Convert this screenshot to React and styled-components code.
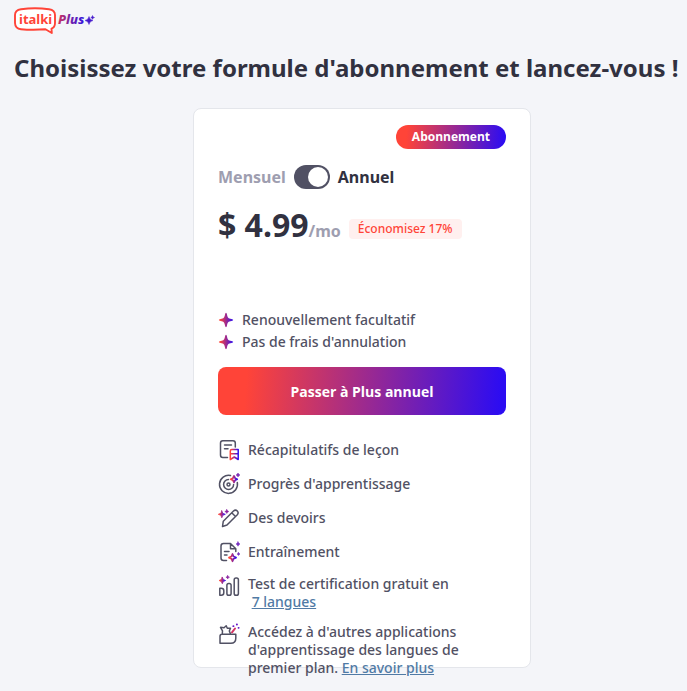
import { useState } from "react";
import styled, { createGlobalStyle } from "styled-components";

export default function App() {
  const [annual, setAnnual] = useState(true);

  return (
    <Page>
      <GlobalStyle />
      <Header>
        <Logo />
      </Header>
      <Title>Choisissez votre formule d'abonnement et lancez-vous !</Title>
      <Plans>
        <Card>
          <Badge>Abonnement</Badge>
          <PeriodSwitch>
            <Period $active={!annual}>Mensuel</Period>
            <Toggle
              type="checkbox"
              role="switch"
              aria-label="Annuel"
              checked={annual}
              onChange={(e) => setAnnual(e.target.checked)}
            />
            <Period $active={annual}>Annuel</Period>
          </PeriodSwitch>
          <PriceRow>
            <Price>
              $ 4.99<Unit>/mo</Unit>
            </Price>
            <Saving>Économisez 17%</Saving>
          </PriceRow>
          <Perks>
            <Perk>
              <StarIcon />
              Renouvellement facultatif
            </Perk>
            <Perk>
              <StarIcon />
              Pas de frais d'annulation
            </Perk>
          </Perks>
          <UpgradeButton type="button">Passer à Plus annuel</UpgradeButton>
          <Features>
            <Feature>
              <SummaryIcon />
              <FeatureText>Récapitulatifs de leçon</FeatureText>
            </Feature>
            <Feature>
              <TargetIcon />
              <FeatureText>Progrès d'apprentissage</FeatureText>
            </Feature>
            <Feature>
              <PencilIcon />
              <FeatureText>Des devoirs</FeatureText>
            </Feature>
            <Feature>
              <PracticeIcon />
              <FeatureText>Entraînement</FeatureText>
            </Feature>
            <Feature $multiline>
              <ChartIcon />
              <FeatureText>
                Test de certification gratuit en
                <br />
                &nbsp;<Link href="#langues">7 langues</Link>
              </FeatureText>
            </Feature>
            <Feature $multiline>
              <AppsIcon />
              <FeatureText>
                Accédez à d'autres applications d'apprentissage des langues de
                premier plan. <Link href="#plus">En savoir plus</Link>
              </FeatureText>
            </Feature>
          </Features>
        </Card>
      </Plans>
    </Page>
  );
}

function Logo() {
  return (
    <svg width="82" height="28" viewBox="0 0 82 28" role="img" aria-label="italki Plus">
      <defs>
        <linearGradient id="logo-plus" x1="44" x2="82" y1="0" y2="0" gradientUnits="userSpaceOnUse">
          <stop offset="0" stopColor="#d22f5c" />
          <stop offset="0.3" stopColor="#7a22a6" />
          <stop offset="0.75" stopColor="#2a10e8" />
          <stop offset="1" stopColor="#5a1cc0" />
        </linearGradient>
      </defs>
      <path
        d="M7 3.2 Q21 1.2 35 3.2 Q41 4 41 9 V17 Q41 21.500 37.500 22.600 L37.800 27 L31.500 23.300 Q18 24.200 7 23.200 Q1.200 22.600 1 17 V9 Q1 4 7 3.200Z"
        fill="#fff"
        stroke="#ff4438"
        strokeWidth="1.900"
        strokeLinejoin="round"
      />
      <LogoName x="5" y="18">italki</LogoName>
      <LogoPlus x="44" y="18">Plus</LogoPlus>
      <path
        d="M75 10.500 Q75.700 14 79 14.500 Q75.700 15 75 18.500 Q74.300 15 71 14.500 Q74.300 14 75 10.500Z M78.500 9.500 L79.200 11 L80.500 11.500 L79.200 12 L78.500 13.300 L78 12 L76.800 11.500 L78 11Z"
        fill="#4418cc"
        stroke="#4418cc"
        strokeWidth="0.500"
      />
    </svg>
  );
}

function IconGradient({ id }) {
  return (
    <defs>
      <linearGradient id={id} x1="0" x2="1" y1="0" y2="0">
        <stop offset="0.08" stopColor="#ff4438" />
        <stop offset="1" stopColor="#2c0cf2" />
      </linearGradient>
    </defs>
  );
}

function StarIcon() {
  return (
    <svg width="16" height="16" viewBox="0 0 16 16" aria-hidden="true">
      <IconGradient id="star" />
      <path
        d="M8 0.800 Q8.700 0.800 9 2.500 C9.700 5.900 10.100 6.300 13.500 7 Q15.200 7.300 15.200 8 Q15.200 8.700 13.500 9 C10.100 9.700 9.700 10.100 9 13.500 Q8.700 15.200 8 15.200 Q7.300 15.200 7 13.500 C6.300 10.100 5.900 9.700 2.500 9 Q0.800 8.700 0.800 8 Q0.800 7.300 2.500 7 C5.900 6.300 6.300 5.900 7 2.500 Q7.300 0.800 8 0.800Z"
        fill="url(#star)"
      />
    </svg>
  );
}

function SummaryIcon() {
  return (
    <Icon viewBox="0 0 22 22" aria-hidden="true">
      <IconGradient id="summary" />
      <path d="M9.500 18.500H4.800Q2.500 18.500 2.500 16V4Q2.500 1.700 4.800 1.700H15Q17.300 1.700 17.300 4V8M6.500 6H13.500M6.500 9.700H10" />
      <path d="M12.300 20.500V12Q12.300 10.500 13.800 10.500H20.200V20.500L16.300 18L12.300 20.500M12.500 14.800H20" stroke="url(#summary)" />
    </Icon>
  );
}

function TargetIcon() {
  return (
    <Icon viewBox="0 0 22 22" aria-hidden="true">
      <IconGradient id="target" />
      <path d="M12.500 2.600A9 9 0 1 0 19.300 9.500M10.500 6.500A5 5 0 1 0 15.600 11.500" />
      <circle cx="10.500" cy="11.500" r="1.500" />
      <path d="M16 3L17.100 5.200L19.200 6.200L17.100 7.200L16 9.400L14.900 7.200L12.700 6.200L14.900 5.200Z" stroke="url(#target)" strokeWidth="1.800" />
      <path d="M20 0L20.700 1.300L22 2L20.700 2.700L20 4L19.300 2.700L18 2L19.300 1.300Z" fill="#7620b0" stroke="#7620b0" strokeWidth="0.500" />
    </Icon>
  );
}

function PencilIcon() {
  return (
    <Icon viewBox="0 0 22 22" aria-hidden="true">
      <IconGradient id="pencil" />
      <path d="M4.500 19.500L5.300 14.200L15.500 4Q17.500 2.200 19.300 4Q21 5.800 19.300 7.700L9 18L4.500 19.500ZM13.700 5.800L17.500 9.500" />
      <path d="M3.800 3.800L4.800 6.300L7.300 7.300L4.800 8.300L3.800 10.800L2.800 8.300L0.300 7.300L2.800 6.300Z" fill="url(#pencil)" stroke="url(#pencil)" strokeWidth="0.800" />
      <path d="M8.800 2.500L9.500 3.800L10.800 4.500L9.500 5.200L8.800 6.500L8.100 5.200L6.800 4.500L8.100 3.800Z" fill="#8921a0" stroke="#8921a0" strokeWidth="0.500" />
    </Icon>
  );
}

function PracticeIcon() {
  return (
    <Icon viewBox="0 0 22 22" aria-hidden="true">
      <IconGradient id="practice" />
      <path d="M8.500 19.500H5.500Q3 19.500 3 17V5Q3 2.500 5.500 2.500H12.500L17.800 7.800V10.500M12.500 2.500V7.800H17.800M6.500 10.500H11M6.500 14H9" />
      <path d="M14.500 13L15.600 15.500L18 16.600L15.600 17.700L14.500 20.200L13.400 17.700L11 16.600L13.400 15.500Z" stroke="url(#practice)" strokeWidth="1.800" />
      <path d="M20 0.800L20.700 2.300L22 3L20.700 3.700L20 5.200L19.300 3.700L18 3L19.300 2.300ZM20.500 11.500L21 12.500L22 13L21 13.500L20.500 14.500L20 13.500L19 13L20 12.500Z" fill="#6d20bc" stroke="#6d20bc" strokeWidth="0.500" />
    </Icon>
  );
}

function ChartIcon() {
  return (
    <Icon viewBox="0 0 22 22" aria-hidden="true">
      <IconGradient id="chart" />
      <path d="M1.800 20.300V13.300H3.300Q5.800 13.300 5.800 15.800V17.800Q5.800 20.300 3.300 20.300Z" />
      <rect x="8.900" y="8.500" width="4.200" height="11.800" rx="1.800" />
      <rect x="16.200" y="3" width="4.200" height="17.300" rx="1.800" />
      <path d="M4.300 2.300L5.300 4.500L7.500 5.500L5.300 6.500L4.300 8.700L3.300 6.500L1.100 5.500L3.300 4.500Z" fill="url(#chart)" stroke="url(#chart)" strokeWidth="0.900" />
      <path d="M9.700 0.500L10.300 1.600L11.500 2.200L10.300 2.800L9.700 4L9.100 2.800L7.900 2.200L9.100 1.600Z" fill="#8921a0" stroke="#8921a0" strokeWidth="0.500" />
    </Icon>
  );
}

function AppsIcon() {
  return (
    <Icon viewBox="0 0 22 22" aria-hidden="true">
      <path d="M2 20.300V13.200Q2 11.200 4 11.200H17.800V15.300Q17.800 20.300 12.800 20.300ZM4.300 10.800L4.500 7.800L2.500 4.300L6 4.800L8.200 2.800L9.300 5.300L12.500 5.200L11.300 8L12.500 10.800" />
      <path d="M14 9.300L17 5.500" stroke="#d53363" strokeWidth="2" />
      <path d="M15.300 3.200H15.500M18.800 1.500H19M20.500 4.800H20.700" stroke="#6517c5" strokeWidth="1.800" />
    </Icon>
  );
}

const GlobalStyle = createGlobalStyle`
  * {
    box-sizing: border-box;
  }

  body {
    margin: 0;
    background: #f4f5f9;
    color: #515164;
    font-family: "Noto Sans", "Open Sans", sans-serif;
    font-size: 14px;
    font-weight: 500;
  }
`;

const brandGradient = "linear-gradient(94deg, #ff4438 10%, #2c0cf2 98%)";

const Page = styled.main`
  padding-bottom: 14px;
`;

const Header = styled.header`
  display: flex;
  padding: 6px 14px 0;
`;

const LogoName = styled.text`
  fill: #ff4438;
  font-size: 13px;
  font-weight: 700;
`;

const LogoPlus = styled.text`
  fill: url(#logo-plus);
  font-size: 13px;
  font-style: italic;
  font-weight: 800;
`;

const Title = styled.h1`
  margin: 16px 0 0;
  padding-left: 14px;
  color: #313140;
  font-size: 24px;
  font-weight: 700;
  line-height: 36px;
  white-space: nowrap;
`;

const Plans = styled.section`
  display: flex;
  justify-content: center;
  padding: 22px 0 0 37px;
`;

// the plan card keeps its height, a long feature list runs over the edge
const Card = styled.article`
  display: flex;
  flex-direction: column;
  width: 338px;
  height: 560px;
  padding: 16px 24px;
  border: 1px solid #e4e6eb;
  border-radius: 8px;
  background: #fff;
`;

const Badge = styled.span`
  align-self: flex-end;
  padding: 0 16px;
  border-radius: 12px;
  background: ${brandGradient};
  color: #fff;
  font-family: "Open Sans", "Noto Sans", sans-serif;
  font-size: 12px;
  font-weight: 700;
  line-height: 24px;
`;

const PeriodSwitch = styled.div`
  display: flex;
  align-items: center;
  gap: 8px;
  margin-top: 16px;
`;

const Period = styled.span`
  color: ${({ $active }) => ($active ? "#313140" : "#9e9eb0")};
  font-size: 16px;
  font-weight: 700;
  line-height: 24px;
`;

const Toggle = styled.input`
  appearance: none;
  display: flex;
  justify-content: ${({ checked }) => (checked ? "flex-end" : "flex-start")};
  width: 36px;
  height: 24px;
  margin: 0;
  padding: 2px;
  border-radius: 12px;
  background: #515164;
  cursor: pointer;

  &::before {
    content: "";
    width: 20px;
    height: 20px;
    border-radius: 50%;
    background: #fff;
  }
`;

const PriceRow = styled.div`
  display: flex;
  align-items: center;
  gap: 8px;
  height: 48px;
  margin-top: 15px;
`;

const Price = styled.div`
  color: #313140;
  font-size: 32px;
  font-weight: 700;
  line-height: 48px;
`;

const Unit = styled.span`
  color: #9e9eb0;
  font-size: 16px;
`;

const Saving = styled.span`
  margin-top: 2px;
  padding: 0 9px;
  border-radius: 4px;
  background: #fff0ef;
  color: #ff4438;
  font-size: 12px;
  line-height: 20px;
`;

const Perks = styled.ul`
  margin: 57px 0 0;
  padding: 0;
  list-style: none;
`;

const Perk = styled.li`
  display: flex;
  align-items: center;
  gap: 8px;
  line-height: 22px;
`;

const UpgradeButton = styled.button`
  flex: none;
  height: 48px;
  margin-top: 14px;
  border: 0;
  border-radius: 8px;
  background: ${brandGradient};
  color: #fff;
  font-family: "Open Sans", "Noto Sans", sans-serif;
  font-size: 14px;
  font-weight: 700;
  cursor: pointer;
`;

const Features = styled.ul`
  display: flex;
  flex-direction: column;
  gap: 12px;
  margin: 24px 0 0;
  padding: 0;
  list-style: none;
`;

const Feature = styled.li`
  display: flex;
  align-items: ${({ $multiline }) => ($multiline ? "flex-start" : "center")};
  gap: 8px;
`;

const FeatureText = styled.span`
  flex: 1;
  padding-right: 24px;
  line-height: 18px;
`;

const Icon = styled.svg`
  flex: none;
  width: 22px;
  height: 22px;
  fill: none;
  stroke: #515164;
  stroke-width: 1.5px;
  stroke-linecap: round;
  stroke-linejoin: round;
`;

const Link = styled.a`
  color: #507aa5;
  text-decoration: underline;
`;
